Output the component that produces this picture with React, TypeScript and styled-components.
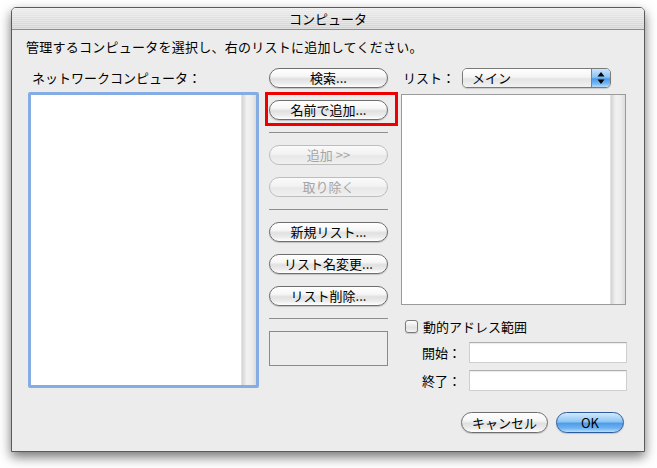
import React from "react";
import styled, { createGlobalStyle } from "styled-components";

const GlobalStyle = createGlobalStyle`
  html, body {
    margin: 0;
    padding: 0;
    background: #fff;
  }
  body {
    font-family: "Noto Sans CJK JP", "Noto Sans", sans-serif;
    font-size: 13px;
    color: #000;
  }
  * {
    box-sizing: border-box;
  }
`;

const Page = styled.div({
  width: "657px",
  height: "468px",
  padding: "7px 0 0 11px",
});

const Window = styled.div({
  width: "634px",
  height: "445px",
  display: "flex",
  flexDirection: "column",
  background: "#ececec",
  border: "1px solid #5a5a5a",
  borderRadius: "5px 5px 0 0",
  boxShadow: "0 5px 12px rgba(0,0,0,0.55)",
  overflow: "hidden",
});

const TitleBar = styled.div({
  height: "22px",
  flexShrink: 0,
  display: "flex",
  justifyContent: "center",
  alignItems: "center",
  fontSize: "13px",
  background:
    "repeating-linear-gradient(to bottom, rgba(255,255,255,0.35) 0 1px, transparent 1px 2px), linear-gradient(to bottom, #ececec, #d2d2d2)",
  borderBottom: "1px solid #8c8c8c",
});

const Body = styled.div({
  flex: 1,
  padding: "8px 0 0 14px",
  display: "flex",
  flexDirection: "column",
});

const Instruction = styled.div({
  height: "18px",
  lineHeight: "18px",
  letterSpacing: "0.25px",
});

const Row = styled.div({
  display: "flex",
  marginTop: "12px",
  marginLeft: "2px",
});

const LeftColumn = styled.div({
  width: "231px",
  display: "flex",
  flexDirection: "column",
});

const Label = styled.div<{ $pad?: number }>`
  height: 20px;
  line-height: 20px;
  padding-left: ${(p) => p.$pad ?? 0}px;
  white-space: nowrap;
`;

const FocusRing = styled.div({
  marginTop: "4px",
  width: "231px",
  height: "296px",
  border: "3px solid #86ace4",
  borderRadius: "2px",
  display: "flex",
});

const ListBox = styled.div<{ $h?: number }>`
  width: 225px;
  height: ${(p) => (p.$h ? p.$h + "px" : "100%")};
  display: flex;
  background: #fff;
  border: ${(p) => (p.$h ? "1px solid #9a9a9a" : "none")};
  flex-shrink: 0;
`;

const ListArea = styled.div({
  flex: 1,
  background: "#fff",
});

const ScrollTrack = styled.div({
  width: "15px",
  background:
    "linear-gradient(to right, #d4d4d4, #f2f2f2 35%, #ececec 70%, #dcdcdc)",
  borderLeft: "1px solid #e2e2e2",
});

const MiddleColumn = styled.div({
  width: "119px",
  marginLeft: "10px",
  display: "flex",
  flexDirection: "column",
  gap: "12px",
});

const AquaButton = styled.button<{ $primary?: boolean; $w?: number; $h?: number }>`
  width: ${(p) => (p.$w ? p.$w + "px" : "100%")};
  height: ${(p) => p.$h ?? 20}px;
  padding: 0 0 1px;
  border-radius: 11px;
  border: 1px solid ${(p) => (p.$primary ? "#2d5c9c" : "#6e6e6e")};
  background: ${(p) =>
    p.$primary
      ? "linear-gradient(to bottom, #d2eafd 0%, #8fc5f4 45%, #4f9de9 55%, #6fb3f1 80%, #b9defc 100%)"
      : "linear-gradient(to bottom, #ffffff 0%, #f6f6f6 40%, #e0e0e0 55%, #ececec 80%, #ffffff 100%)"};
  box-shadow: 0 1px 1px rgba(0, 0, 0, 0.18);
  font-family: "Noto Sans CJK JP", "Noto Sans", sans-serif;
  font-size: 13px;
  line-height: 17px;
  color: #000;
  white-space: nowrap;
  cursor: default;

  &:disabled {
    color: #a6a6a6;
    border-color: #bdbdbd;
    background: linear-gradient(to bottom, #fafafa 0%, #f2f2f2 45%, #e8e8e8 55%, #f0f0f0 100%);
    box-shadow: none;
  }
`;

const Highlight = styled.div({
  position: "relative",
  "&::after": {
    content: '""',
    position: "absolute",
    left: "-4px",
    right: "-10px",
    top: "-8px",
    bottom: "-6px",
    border: "3px solid #ee0000",
    pointerEvents: "none",
  },
});

const Separator = styled.div({
  height: "1px",
  background: "#8e8e8e",
  flexShrink: 0,
});

const EmptyBox = styled.div({
  height: "35px",
  border: "1px solid #8a8a8a",
  background: "#ededed",
});

const RightColumn = styled.div({
  width: "226px",
  marginLeft: "13px",
  display: "flex",
  flexDirection: "column",
});

const PopupRow = styled.div({
  display: "flex",
  alignItems: "center",
  height: "20px",
  justifyContent: "space-between",
  paddingRight: "16px",
});

const Popup = styled.div({
  width: "149px",
  height: "20px",
  display: "flex",
  border: "1px solid #7a7a7a",
  borderRadius: "5px",
  overflow: "hidden",
  boxShadow: "0 1px 1px rgba(0,0,0,0.15)",
});

const PopupValue = styled.div({
  flex: 1,
  paddingLeft: "9px",
  lineHeight: "18px",
  background:
    "linear-gradient(to bottom, #ffffff 0%, #f4f4f4 45%, #e4e4e4 55%, #f2f2f2 100%)",
});

const PopupArrows = styled.div({
  width: "19px",
  display: "flex",
  alignItems: "center",
  justifyContent: "center",
  borderLeft: "1px solid #5a86c4",
  background:
    "linear-gradient(to bottom, #c9e5fc 0%, #8cc3f4 45%, #4b9ae8 55%, #72b5f1 80%, #b6dcfb 100%)",
});

const RightList = styled.div({
  marginTop: "6px",
});

const CheckRow = styled.div({
  display: "flex",
  alignItems: "center",
  marginTop: "15px",
  marginLeft: "4px",
  height: "13px",
  gap: "5px",
});

const Checkbox = styled.span({
  width: "13px",
  height: "13px",
  borderRadius: "3px",
  border: "1px solid #7a7a7a",
  background: "linear-gradient(to bottom, #ffffff, #e2e2e2 60%, #f4f4f4)",
  boxShadow: "0 1px 1px rgba(0,0,0,0.15)",
});

const FieldRow = styled.div<{ $top: number }>`
  display: flex;
  align-items: center;
  justify-content: space-between;
  margin-top: ${(p) => p.$top}px;
  padding-left: 21px;
  height: 21px;
`;

const TextField = styled.div({
  width: "158px",
  height: "21px",
  background: "#fff",
  border: "1px solid #cfcfcf",
  borderTopColor: "#aeaeae",
  boxShadow: "inset 0 1px 1px rgba(0,0,0,0.08)",
});

const ButtonRow = styled.div({
  display: "flex",
  justifyContent: "flex-end",
  gap: "8px",
  marginTop: "21px",
  paddingRight: "3px",
});

const ArrowsIcon = () => (
  <svg width="8" height="12" viewBox="0 0 8 12">
    <polygon points="4,0 7.5,4.5 0.5,4.5" fill="#000" />
    <polygon points="0.5,7.5 7.5,7.5 4,12" fill="#000" />
  </svg>
);

export default function App() {
  return (
    <>
      <GlobalStyle />
      <Page>
        <Window>
          <TitleBar>コンピュータ</TitleBar>
          <Body>
            <Instruction>
              管理するコンピュータを選択し、右のリストに追加してください。
            </Instruction>
            <Row>
              <LeftColumn>
                <Label $pad={4}>ネットワークコンピュータ：</Label>
                <FocusRing>
                  <ListBox>
                    <ListArea />
                    <ScrollTrack />
                  </ListBox>
                </FocusRing>
              </LeftColumn>

              <MiddleColumn>
                <AquaButton>検索...</AquaButton>
                <Highlight>
                  <AquaButton>名前で追加...</AquaButton>
                </Highlight>
                <Separator />
                <AquaButton disabled>追加 &gt;&gt;</AquaButton>
                <AquaButton disabled>取り除く</AquaButton>
                <Separator />
                <AquaButton>新規リスト...</AquaButton>
                <AquaButton>リスト名変更...</AquaButton>
                <AquaButton>リスト削除...</AquaButton>
                <Separator />
                <EmptyBox />
              </MiddleColumn>

              <RightColumn>
                <PopupRow>
                  <Label $pad={2}>リスト：</Label>
                  <Popup>
                    <PopupValue>メイン</PopupValue>
                    <PopupArrows>
                      <ArrowsIcon />
                    </PopupArrows>
                  </Popup>
                </PopupRow>
                <RightList>
                  <ListBox $h={211}>
                    <ListArea />
                    <ScrollTrack />
                  </ListBox>
                </RightList>
                <CheckRow>
                  <Checkbox />
                  <span>動的アドレス範囲</span>
                </CheckRow>
                <FieldRow $top={9}>
                  <span>開始：</span>
                  <TextField />
                </FieldRow>
                <FieldRow $top={7}>
                  <span>終了：</span>
                  <TextField />
                </FieldRow>
                <ButtonRow>
                  <AquaButton $w={87} $h={21}>
                    キャンセル
                  </AquaButton>
                  <AquaButton $primary $w={68} $h={21}>
                    OK
                  </AquaButton>
                </ButtonRow>
              </RightColumn>
            </Row>
          </Body>
        </Window>
      </Page>
    </>
  );
}
